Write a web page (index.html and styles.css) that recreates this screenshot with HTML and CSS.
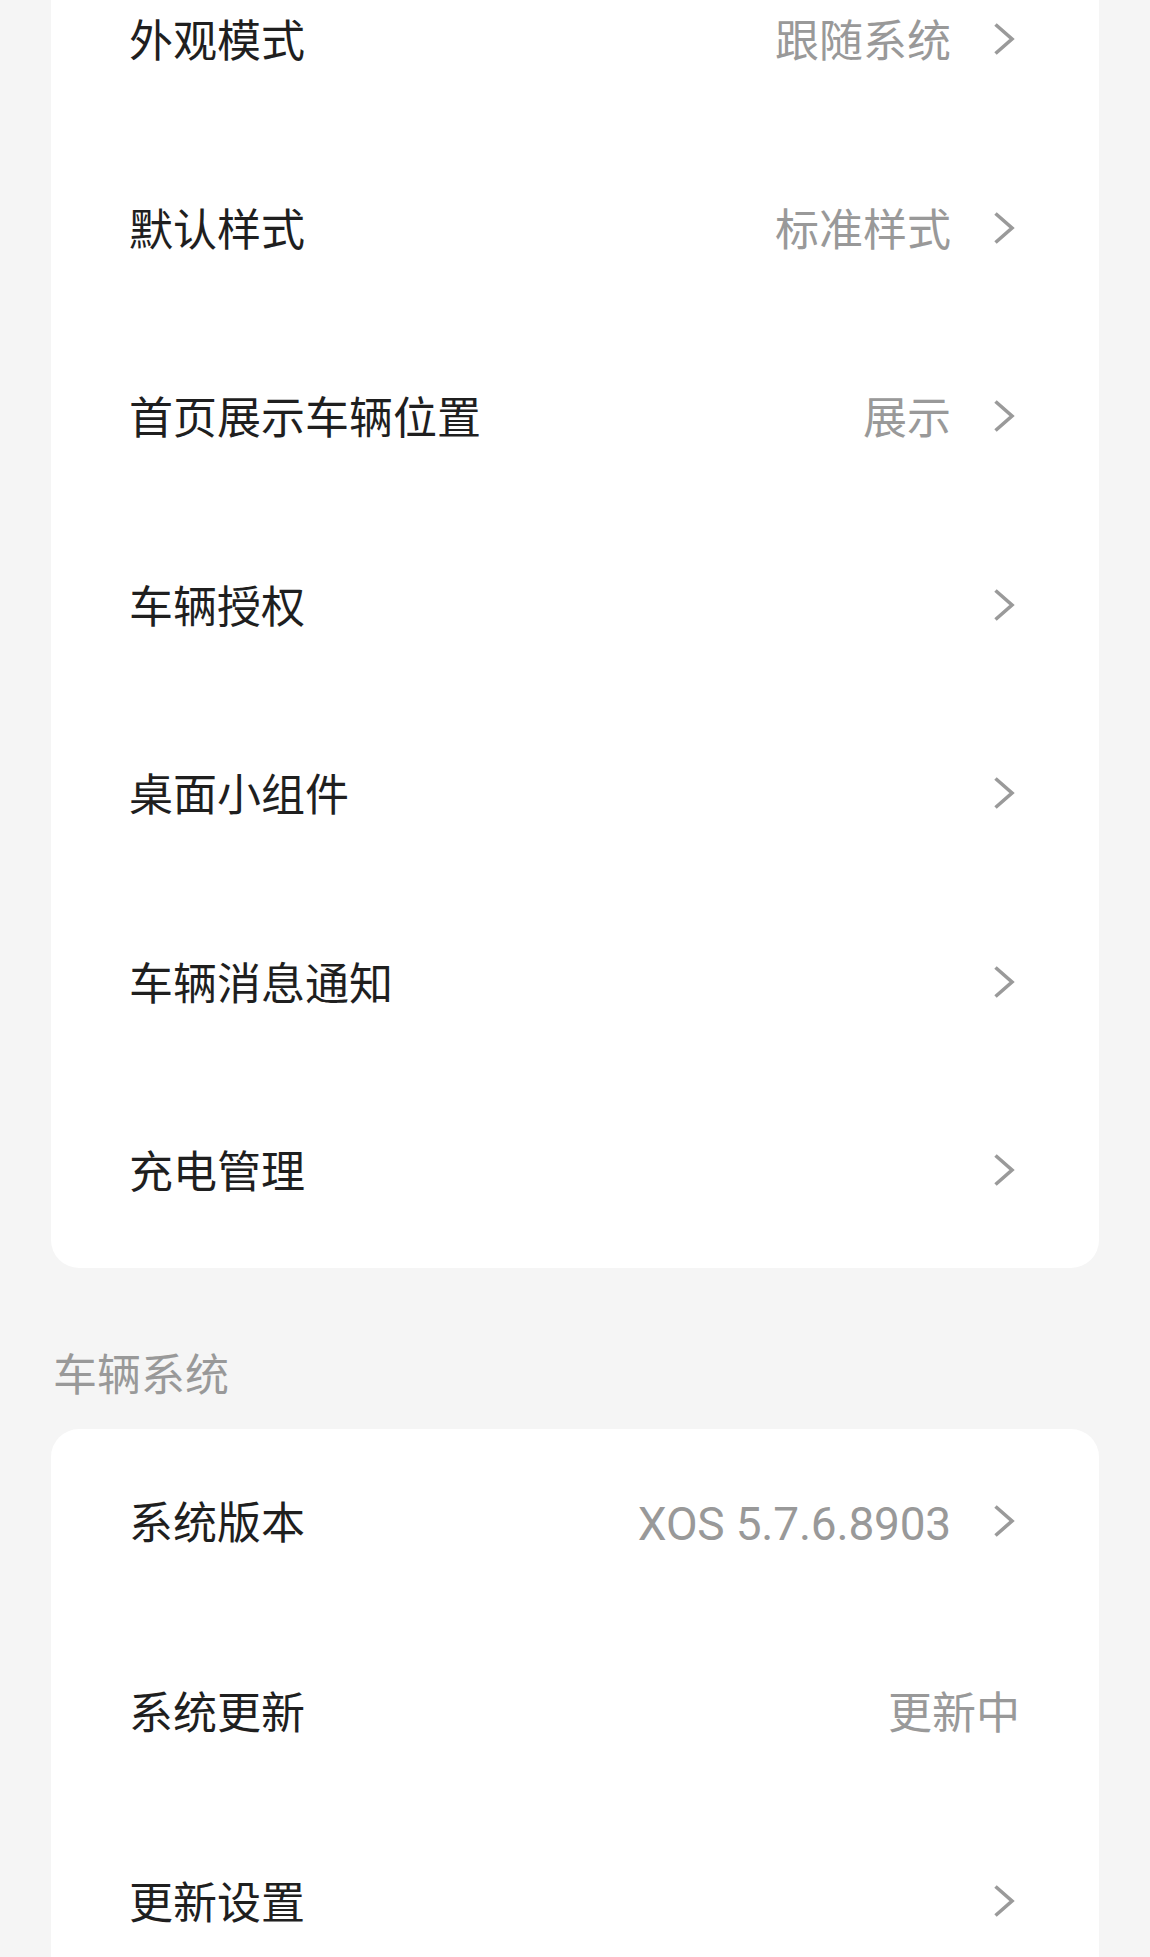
FILE: index.html
```html
<!DOCTYPE html>
<html lang="zh-CN">
<head>
<meta charset="utf-8">
<title>设置</title>
<link rel="stylesheet" href="styles.css">
</head>
<body>
<div class="page">
  <div class="card card-first">
    <div class="row"><span class="label">外观模式</span><span class="value">跟随系统</span><svg class="chev" viewBox="0 0 24 36"><polyline points="2.5,3.5 19,18 2.5,32.5"/></svg></div>
    <div class="row"><span class="label">默认样式</span><span class="value">标准样式</span><svg class="chev" viewBox="0 0 24 36"><polyline points="2.5,3.5 19,18 2.5,32.5"/></svg></div>
    <div class="row"><span class="label">首页展示车辆位置</span><span class="value">展示</span><svg class="chev" viewBox="0 0 24 36"><polyline points="2.5,3.5 19,18 2.5,32.5"/></svg></div>
    <div class="row"><span class="label">车辆授权</span><svg class="chev" viewBox="0 0 24 36"><polyline points="2.5,3.5 19,18 2.5,32.5"/></svg></div>
    <div class="row"><span class="label">桌面小组件</span><svg class="chev" viewBox="0 0 24 36"><polyline points="2.5,3.5 19,18 2.5,32.5"/></svg></div>
    <div class="row"><span class="label">车辆消息通知</span><svg class="chev" viewBox="0 0 24 36"><polyline points="2.5,3.5 19,18 2.5,32.5"/></svg></div>
    <div class="row"><span class="label">充电管理</span><svg class="chev" viewBox="0 0 24 36"><polyline points="2.5,3.5 19,18 2.5,32.5"/></svg></div>
  </div>

  <div class="section-title">车辆系统</div>

  <div class="card card-second">
    <div class="row"><span class="label">系统版本</span><span class="value ver">XOS 5.7.6.8903</span><svg class="chev" viewBox="0 0 24 36"><polyline points="2.5,3.5 19,18 2.5,32.5"/></svg></div>
    <div class="row"><span class="label">系统更新</span><span class="value value-end">更新中</span></div>
    <div class="row"><span class="label">更新设置</span><svg class="chev" viewBox="0 0 24 36"><polyline points="2.5,3.5 19,18 2.5,32.5"/></svg></div>
  </div>
</div>
</body>
</html>
```

FILE: styles.css
```css
html, body {
  margin: 0;
  padding: 0;
  background: #f5f5f5;
}

body {
  font-family: "Roboto", "Noto Sans CJK SC", sans-serif;
  overflow: hidden;
}

.page {
  padding: 0 51px;
}

.card {
  background: #ffffff;
  border-radius: 28px;
}

.card-first {
  margin-top: -52px;
}

.row {
  height: 188.5px;
  display: flex;
  align-items: center;
  padding: 0 82px 0 78px;
}

.card-second .row {
  height: 190px;
}

.label {
  flex: 1;
  font-size: 44px;
  line-height: 60px;
  color: #1f1f1f;
  white-space: nowrap;
}

.value {
  font-size: 44px;
  line-height: 60px;
  color: #999999;
  white-space: nowrap;
}

.ver {
  font-size: 46px;
  letter-spacing: -0.2px;
}

.value-end {
  margin-right: -3px;
}

.chev {
  width: 24px;
  height: 36px;
  margin-left: 42px;
  margin-top: -6px;
  flex: none;
}

.chev polyline {
  fill: none;
  stroke: #9a9a9a;
  stroke-width: 3.6;
  stroke-linejoin: miter;
  stroke-linecap: butt;
}

.section-title {
  font-size: 44px;
  line-height: 60px;
  color: #999999;
  padding: 78px 0 23px 2px;
}
```
